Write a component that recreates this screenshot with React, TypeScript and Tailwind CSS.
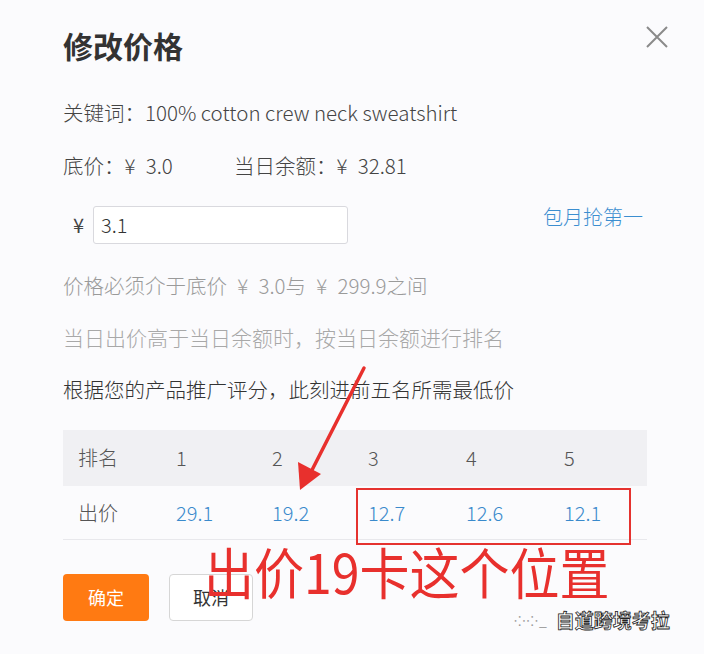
import React from "react";

const font = '"Noto Sans CJK SC", "Noto Sans", sans-serif';

export default function App() {
  const cols = ["1", "2", "3", "4", "5"];
  const prices = ["29.1", "19.2", "12.7", "12.6", "12.1"];
  return (
    <div
      className="relative w-[704px] h-[654px] overflow-hidden bg-[#fbfbfd] text-[#444]"
      style={{ fontFamily: font }}
    >
      <div className="px-[63px] pt-[25px]">
        <div className="h-[40px] leading-[40px] text-[30px] font-bold text-[#333]">修改价格</div>

        <div className="mt-[33px] h-[28px] leading-[28px] text-[20.5px] font-light text-[#444]">
          关键词：100% cotton crew neck sweatshirt
        </div>

        <div className="mt-[25px] flex h-[28px] items-center text-[20.5px] font-light text-[#444]">
          <span className="w-[171px]">底价：¥{"\u2002"}3.0</span>
          <span>当日余额：¥{"\u2002"}32.81</span>
        </div>

        <div className="mt-[27px] flex h-[38px] items-center">
          <span className="ml-[10px] w-[20px] text-[20px] text-[#444]">¥</span>
          <div className="flex h-[38px] w-[255px] items-center rounded-[3px] border border-[#d9d9de] bg-white pl-[7px] text-[20px] font-light text-[#333]">
            3.1
          </div>
          <span className="ml-auto -mr-[2px] -mt-[16px] text-[20px] font-light text-[#3b8ed0]">包月抢第一</span>
        </div>

        <div className="mt-[27px] h-[28px] leading-[28px] text-[20.5px] font-light text-[#9a9a9a]">
          价格必须介于底价{"\u2002"}¥{"\u2002"}3.0与{"\u2002"}¥{"\u2002"}299.9之间
        </div>
        <div className="mt-[24px] h-[28px] leading-[28px] text-[21px] font-light text-[#a8a8a8]">
          当日出价高于当日余额时，按当日余额进行排名
        </div>
        <div className="mt-[24px] h-[28px] leading-[28px] text-[20.5px] font-light text-[#333]">
          根据您的产品推广评分，此刻进前五名所需最低价
        </div>

        <div className="mt-[27px] w-[584px] text-[20px] font-light">
          <div className="grid h-[56px] grid-cols-[113px_96px_96px_98px_98px_1fr] items-center bg-[#f0f0f3] text-[#555]">
            <span className="pl-[15px]">排名</span>
            {cols.map((c) => (
              <span key={c}>{c}</span>
            ))}
          </div>
          <div className="grid h-[54px] grid-cols-[113px_96px_96px_98px_98px_1fr] items-center border-b border-[#e8e8ec] text-[#3a8acc]">
            <span className="pl-[15px] text-[#555]">出价</span>
            {prices.map((p) => (
              <span key={p}>{p}</span>
            ))}
          </div>
        </div>

        <div className="mt-[34px] flex gap-[20px]">
          <div className="flex h-[47px] w-[86px] items-center justify-center rounded-[4px] bg-[#ff7a12] text-[18px] text-white">
            确定
          </div>
          <div className="flex h-[47px] w-[84px] items-center justify-center rounded-[4px] border border-[#d6d6d6] bg-white text-[18px] text-[#333]">
            取消
          </div>
        </div>
      </div>

      {/* close icon */}
      <svg className="absolute left-[645px] top-[25px]" width="24" height="24" viewBox="0 0 24 24">
        <path d="M2 2 L22 22 M22 2 L2 22" stroke="#8a8a8a" strokeWidth="2" fill="none" />
      </svg>

      {/* annotation: red box */}
      <div className="absolute left-[356px] top-[488px] h-[57px] w-[275px] border-2 border-[#e5322f]" />

      {/* annotation: arrow */}
      <svg className="absolute left-0 top-0" width="704" height="654" viewBox="0 0 704 654">
        <path d="M364 368 L311 472" stroke="#e8302d" strokeWidth="3.5" fill="none" strokeLinecap="round" />
        <path d="M300 490 L298 462 L321 474 Z" fill="#e8302d" />
      </svg>

      {/* annotation: red text */}
      <div className="absolute left-[204px] top-[531px] text-[50px] leading-[70px] text-[#e8302d] scale-y-[1.1] origin-top">
        出价19卡这个位置
      </div>

      {/* watermark */}
      <div className="absolute left-[514px] top-[606px] flex items-center gap-[8px]">
        <span className="text-[14px] tracking-[1px] text-[#999]">⁘⁘_</span>
        <span className="text-[19px] font-bold text-white [-webkit-text-stroke:0.8px_#222]">自道跨境考拉</span>
      </div>
    </div>
  );
}
